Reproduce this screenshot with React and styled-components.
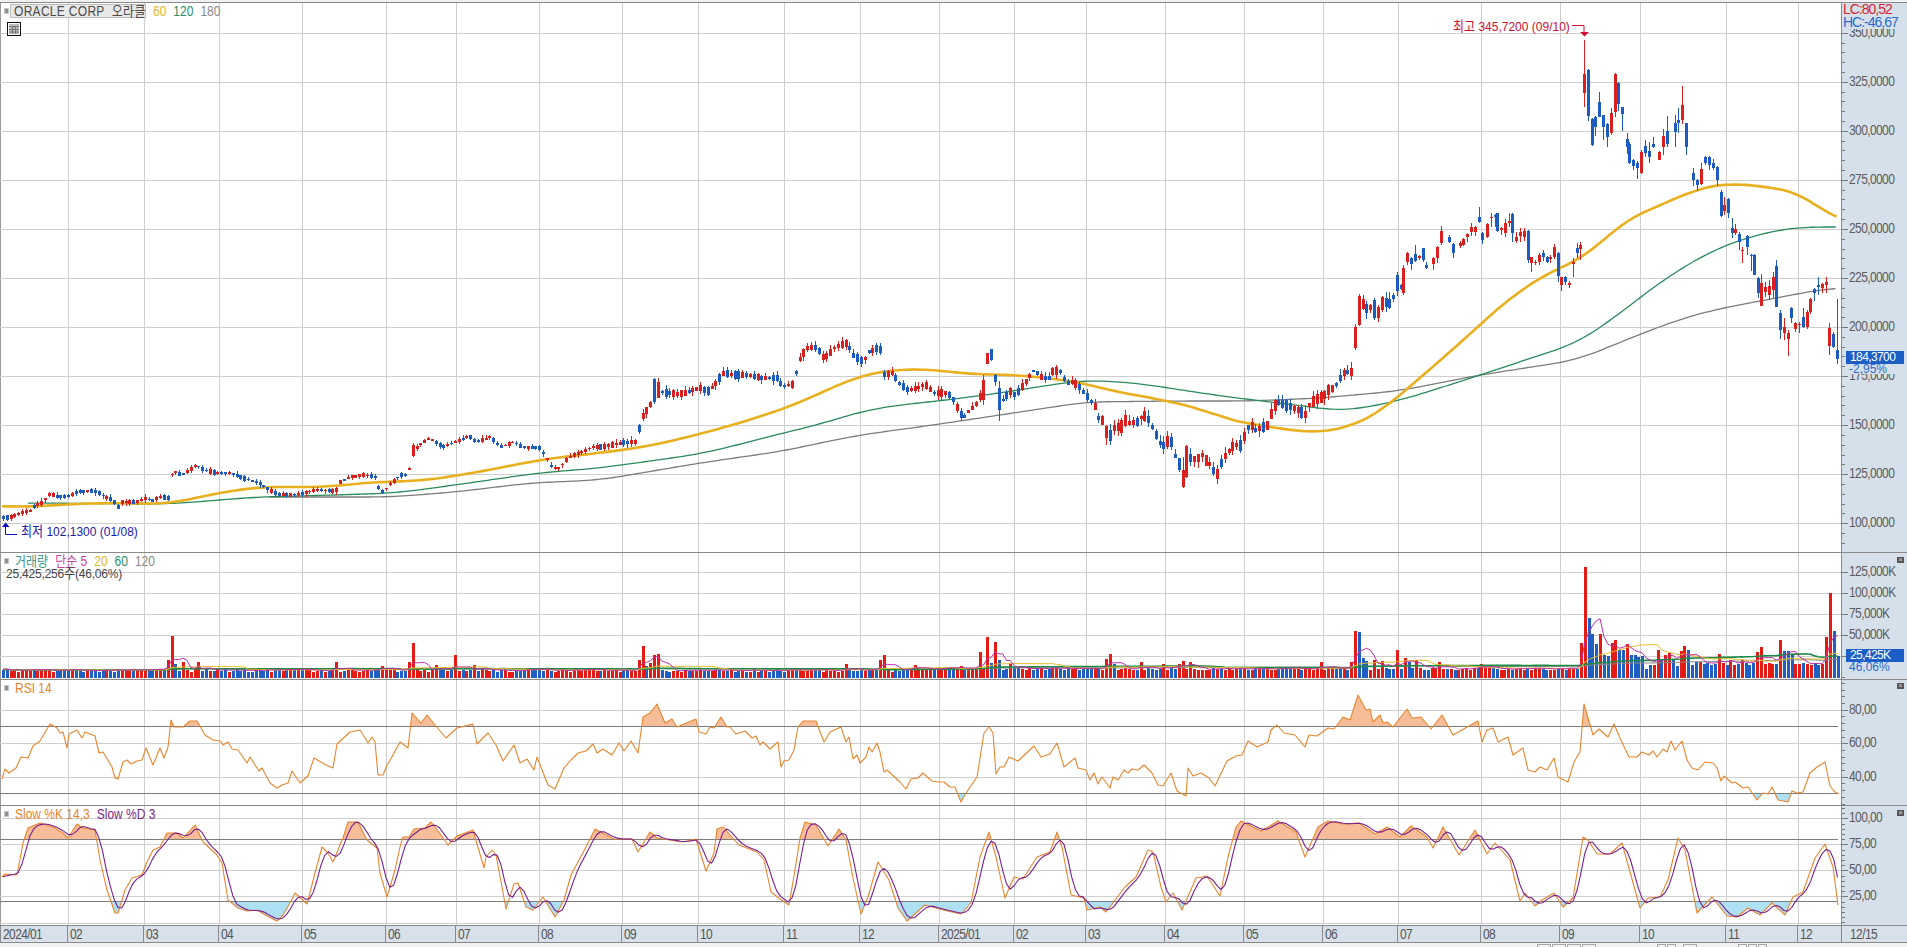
import React from 'react';
import styled, { createGlobalStyle, css } from 'styled-components';

const PLOT_W = 1841;
const STEP = 3.83;
const COUNT = 480;

const GRID_X = [68, 144, 219, 302, 386, 456, 539, 622, 698, 784, 860, 939, 1014, 1086, 1165, 1244, 1323, 1398, 1481, 1560, 1640, 1726, 1798];
const MONTHS = ['2024/01', '02', '03', '04', '05', '06', '07', '08', '09', '10', '11', '12', '2025/01', '02', '03', '04', '05', '06', '07', '08', '09', '10', '11', '12'];

// traced in page pixels: [x, y]
const PRICE = [[2,518],[12,517],[20,513],[30,511],[34,506],[43,502],[49,494],[59,497],[69,496],[77,492],[89,491],[97,492],[105,497],[113,500],[117,508],[122,502],[136,502],[146,498],[152,501],[160,497],[168,498],[172,471],[182,475],[196,465],[204,470],[215,473],[231,473],[243,478],[259,483],[269,490],[277,494],[291,495],[304,493],[316,490],[336,491],[338,483],[350,477],[364,475],[376,477],[378,487],[383,492],[391,483],[401,475],[408,475],[412,450],[417,447],[429,438],[435,442],[443,447],[455,442],[469,436],[476,442],[490,437],[500,447],[514,442],[522,447],[540,448],[546,458],[552,468],[559,468],[569,457],[581,452],[593,447],[602,447],[620,443],[635,442],[642,417],[650,406],[653,390],[657,390],[665,393],[680,394],[700,388],[707,392],[717,382],[722,373],[737,375],[748,375],[760,378],[778,378],[782,387],[793,384],[797,367],[800,358],[808,347],[817,348],[823,358],[830,353],[835,347],[847,343],[853,355],[863,362],[868,352],[877,348],[879,340],[883,375],[892,373],[898,382],[907,390],[917,388],[925,384],[933,393],[947,393],[952,398],[959,412],[963,418],[967,413],[977,403],[982,390],[985.6,355],[989,358],[992.6,353],[997,400],[1000,400],[1005,400],[1008,390],[1015,395],[1023,385],[1028,378],[1034,370],[1042,378],[1050,378],[1053,370],[1062,372],[1065,383],[1073,382],[1080,388],[1087,397],[1095,407],[1098,418],[1102,420],[1106,427],[1109,438],[1113,428],[1118,427],[1124,420],[1128,423],[1137,422],[1143,415],[1147,417],[1151,425],[1155,433],[1159,442],[1162,447],[1166,443],[1170,438],[1173,448],[1177,464],[1181,480],[1186,468],[1188,462],[1192,455],[1196,463],[1200,453],[1203,456],[1207,463],[1211,465],[1215,475],[1219,473],[1222,458],[1226,455],[1230,449],[1234,445],[1241,446],[1245,433],[1249,425],[1253,427],[1256,431],[1260,428],[1268,425],[1271,413],[1275,405],[1279,402],[1284,405],[1291,407],[1298,410],[1305,415],[1309,405],[1313,401],[1318,398],[1323,397],[1328,390],[1334,388],[1339,379],[1343,373],[1348,372],[1352,372],[1354,338],[1358,310],[1362,303],[1366,309],[1369,307],[1374,309],[1377,316],[1381,303],[1385,302],[1388,303],[1392,304],[1396,283],[1400,287]];

// tall candles in the generated part: [x, wickTop, wickBottom, bodyTop, bodyBottom, colour]
const TALL = [[412,443,457,445,456,'R'],[653,378,404,379,402,'B'],[657,378,398,382,398,'R'],[981.6,375,405,380,400,'R'],[985.7,343,366,343,365,'B'],[989,353,364,353,364,'R'],[992.6,349,361,349,360,'B'],[997,381,421,388,410,'B'],[1177.5,458,472,458,470,'B'],[1181.4,457,488,470,487,'R'],[1186,459,478,459,477,'B'],[1188,445,478,446,477,'R'],[1354,324,350,327,348,'R'],[1358,294,326,296,325,'R'],[1373,298,320,300,318,'B'],[1381,296,312,297,310,'R'],[1396,272,296,275,291,'B'],[1107,425,445,426,438,'R'],[1120,418,436,420,433,'R']];

// last stretch, candle by candle, as [x, wickTop, wickBottom, bodyTop, bodyBottom, colour] at 3x from x=1400
const TRACED = [[10,795,885,805,880,'R'],[22,757,795,760,785,'R'],[34,770,810,775,792,'B'],[46,735,785,762,782,'B'],[56,765,780,767,775,'R'],[68,745,785,745,780,'B'],[79,785,808,795,805,'B'],[91,805,832,805,808,'B'],[100,770,810,775,792,'R'],[112,738,790,740,773,'R'],[124,677,735,692,730,'R'],[136,688,720,692,712,'B'],[146,705,730,712,726,'B'],[158,730,773,733,760,'B'],[170,730,755,733,750,'R'],[180,722,745,728,738,'R'],[190,714,738,716,735,'R'],[202,700,725,702,710,'R'],[214,670,708,682,696,'R'],[226,678,708,682,695,'R'],[238,622,668,650,665,'B'],[247,697,733,700,720,'B'],[260,670,715,672,712,'R'],[272,638,680,650,655,'R'],[284,642,680,645,650,'B'],[292,638,695,640,692,'B'],[304,680,705,683,690,'R'],[316,658,712,670,698,'R'],[327,640,680,662,670,'R'],[337,640,725,642,698,'B'],[349,695,730,712,722,'R'],[360,685,725,695,708,'R'],[373,685,722,692,710,'R'],[385,690,790,692,780,'B'],[394,770,815,772,790,'R'],[406,780,795,785,788,'R'],[418,760,795,765,785,'R'],[430,750,782,760,772,'B'],[440,768,790,772,785,'B'],[451,765,790,770,778,'R'],[463,733,778,742,772,'R'],[475,755,845,758,828,'B'],[484,830,872,832,855,'R'],[496,828,855,830,845,'B'],[508,843,865,848,855,'R'],[520,775,830,785,792,'R'],[532,730,775,745,760,'B'],[541,725,780,735,747,'R'],[553,120,320,222,278,'R'],[565,208,362,210,348,'B'],[577,355,438,358,436,'B'],[586,348,408,352,380,'B'],[598,275,352,307,352,'B'],[610,345,420,345,382,'B'],[622,370,440,372,412,'B'],[632,325,405,340,400,'R'],[644,218,352,222,335,'R'],[655,245,332,250,312,'B'],[667,320,392,322,342,'B'],[680,400,462,418,442,'B'],[688,425,492,432,490,'B'],[700,478,510,480,498,'B'],[712,482,536,488,504,'B'],[724,450,522,455,520,'R'],[735,420,470,438,458,'B'],[746,425,488,452,472,'B'],[758,412,445,433,440,'B'],[770,430,562,432,485,'B'],[778,452,480,456,480,'R'],[790,388,465,408,442,'R'],[802,348,440,392,432,'B'],[814,328,405,342,400,'R'],[824,345,440,368,395,'B'],[835,325,400,360,370,'B'],[847,258,372,315,360,'R'],[859,368,465,370,442,'B'],[871,455,535,456,528,'B'],[880,505,558,520,540,'B'],[892,538,572,540,556,'B'],[904,490,555,508,552,'R'],[916,468,495,472,490,'B'],[926,468,510,472,495,'B'],[938,478,510,490,505,'B'],[950,497,558,502,540,'B'],[962,570,650,576,648,'B'],[971,590,645,615,632,'R'],[983,595,655,596,640,'B'],[995,655,715,685,698,'B'],[1006,672,705,688,700,'R'],[1018,695,750,702,725,'B'],[1027,742,790,750,752,'R'],[1040,705,765,708,740,'B'],[1052,762,812,765,767,'B'],[1063,762,825,765,825,'B'],[1073,832,895,835,878,'B'],[1084,822,918,848,918,'R'],[1096,845,890,862,875,'R'],[1108,840,900,858,885,'R'],[1118,815,895,830,870,'R'],[1129,780,922,798,920,'B'],[1141,930,1018,938,990,'B'],[1153,955,1020,980,1000,'R'],[1165,990,1068,1000,1016,'R'],[1174,922,968,925,955,'B'],[1186,965,995,970,988,'R'],[1198,965,1000,972,975,'R'],[1210,925,985,950,980,'B'],[1220,930,987,935,982,'R'],[1231,895,942,897,935,'R'],[1243,865,902,868,878,'B'],[1255,832,885,855,862,'B'],[1265,848,878,852,865,'R'],[1277,832,878,845,855,'R'],[1288,970,1065,985,1038,'R'],[1300,995,1045,1002,1040,'B'],[1312,897,1092,1050,1078,'B']];

const MA60 = [[2,506],[20,507],[45,506],[69,504],[115,503],[170,504],[198,497],[225,492],[257,487],[336,487],[340,485],[376,482],[419,481],[455,476],[494,469],[534,461],[561,457],[600,453],[650,446],[700,434],[750,420],[797,404],[833,387],[863,375],[890,370],[928,369],[967,374],[1017,375],[1064,380],[1093,385],[1114,392],[1150,397],[1182,405],[1202,408],[1218,417],[1250,424],[1279,428],[1300,432],[1323,432],[1350,427],[1379,413],[1400,395],[1450,352],[1513,295],[1557,268],[1587,257],[1620,223],[1667,202],[1700,188],[1728,183],[1777,188],[1805,195],[1837,222]];
const MA120 = [[28,503],[170,504],[257,497],[336,495],[395,493],[455,485],[538,473],[600,468],[650,461],[700,454],[733,446],[783,433],[813,426],[867,410],[900,405],[947,400],[1000,393],[1050,385],[1086,380],[1136,383],[1221,396],[1279,403],[1332,410],[1352,410],[1398,401],[1443,387],[1480,375],[1577,343],[1607,323],[1667,277],[1717,248],[1750,237],[1777,230],[1803,227],[1837,227]];
const MA180 = [[269,497],[391,497],[455,492],[530,483],[600,480],[700,463],[783,451],[820,443],[860,435],[933,425],[1000,415],[1086,402],[1175,401],[1250,401],[1321,398],[1398,391],[1480,375],[1577,360],[1633,337],[1683,318],[1727,307],[1777,298],[1817,290],[1837,288]];

// volume spikes: [x, top, colour]
const SPIKES = [[171.7,636,'R'],[167.7,660,'R'],[175.7,664,'B'],[182,662,'R'],[197.7,662,'R'],[337,662,'R'],[382,666,'R'],[412.5,643,'R'],[408.6,662,'R'],[436,665,'R'],[454,655,'R'],[476,665,'R'],[548,668,'R'],[642,646,'R'],[638.6,660,'R'],[653.6,655,'R'],[657,654,'R'],[650,663,'R'],[646,666,'B'],[846,664,'R'],[878.6,660,'R'],[883.6,655,'R'],[913,665,'R'],[959,666,'R'],[981,652,'R'],[985.7,637,'R'],[990,663,'B'],[996.4,642,'R'],[1000.7,660,'B'],[1008.6,664,'R'],[1105,659,'R'],[1110,654,'R'],[1113,664,'B'],[1139,662,'R'],[1162,664,'R'],[1181,661,'R'],[1177,664,'R'],[1188.6,662,'R'],[1320,662,'R'],[1350,662,'R'],[1354,631,'R'],[1358.6,632,'B'],[1363,658,'B'],[1367,661,'B'],[1373.6,660,'R'],[1380,661,'R'],[1396,650,'R'],[1403.6,658,'R'],[1407,662,'B'],[1415,660,'R'],[1441,662,'R'],[1480,664,'R'],[1580,643,'R'],[1584,567,'R'],[1588,618,'B'],[1592,634,'B'],[1595,644,'B'],[1599,634,'R'],[1603,655,'B'],[1607,656,'B'],[1610,643,'R'],[1614,640,'R'],[1618,650,'B'],[1622,650,'B'],[1626,644,'R'],[1629,655,'B'],[1633,655,'B'],[1637,657,'B'],[1641,656,'B'],[1648,665,'B'],[1652,665,'R'],[1656,650,'R'],[1660,660,'B'],[1664,655,'R'],[1668,653,'R'],[1672,660,'B'],[1678,666,'B'],[1682,651,'R'],[1686,646,'R'],[1690,650,'B'],[1694,662,'B'],[1701,662,'R'],[1712,665,'B'],[1720,654,'R'],[1731,660,'R'],[1742,660,'R'],[1757,652,'R'],[1761,647,'R'],[1780,640,'R'],[1784,651,'B'],[1788,651,'B'],[1792,655,'B'],[1825,637,'R'],[1829,593,'R'],[1833,631,'B'],[1837,656,'B']];

const RSI = [[2,779],[5,769],[9,773],[16,768],[21,757],[28,758],[33,746],[40,741],[50,724],[57,728],[60,733],[63,732],[67,748],[69,734],[77,730],[82,738],[85,732],[95,736],[99,753],[103,752],[112,767],[115,778],[118,779],[123,762],[127,760],[131,764],[137,761],[142,760],[146,748],[153,765],[160,748],[164,758],[168,747],[171,720],[174,727],[183,727],[190,721],[197,721],[205,735],[213,740],[220,741],[223,745],[228,742],[232,749],[238,750],[247,763],[250,757],[259,771],[262,768],[270,783],[277,788],[282,785],[288,783],[292,771],[300,783],[308,776],[314,758],[326,765],[333,768],[337,744],[350,732],[360,730],[368,743],[372,737],[375,742],[378,775],[383,775],[387,765],[392,757],[400,742],[408,748],[412,713],[421,723],[427,715],[435,725],[446,738],[457,728],[473,724],[477,744],[488,733],[496,745],[503,761],[514,745],[520,763],[527,759],[534,770],[537,757],[548,785],[555,789],[564,768],[571,760],[578,753],[586,751],[593,744],[597,753],[603,749],[612,755],[619,743],[624,751],[631,741],[638,753],[643,717],[650,713],[657,704],[665,723],[672,719],[677,727],[696,719],[699,732],[706,734],[710,727],[714,728],[721,717],[727,727],[730,727],[736,734],[745,731],[752,738],[756,736],[760,745],[763,742],[770,749],[778,742],[781,767],[784,761],[789,760],[794,750],[798,727],[803,721],[816,721],[824,742],[830,732],[841,727],[846,742],[849,737],[853,759],[857,755],[860,763],[866,757],[869,747],[872,752],[877,743],[880,752],[884,772],[887,770],[900,782],[906,789],[911,779],[918,778],[923,773],[932,781],[939,782],[944,782],[950,787],[955,787],[961,802],[966,793],[977,777],[984,733],[989,727],[993,733],[996,774],[1000,767],[1004,767],[1009,757],[1018,761],[1034,746],[1041,757],[1050,754],[1057,743],[1064,767],[1075,758],[1078,768],[1086,770],[1090,780],[1094,773],[1098,784],[1102,777],[1110,788],[1113,777],[1118,780],[1124,770],[1128,773],[1132,769],[1138,770],[1144,765],[1152,773],[1158,785],[1163,786],[1171,773],[1177,791],[1186,796],[1188,768],[1193,776],[1201,773],[1209,778],[1215,786],[1227,761],[1236,756],[1242,755],[1248,741],[1257,747],[1268,742],[1271,730],[1277,725],[1284,733],[1295,735],[1305,747],[1309,735],[1317,736],[1328,728],[1334,729],[1343,717],[1350,720],[1358,695],[1366,710],[1370,709],[1373,722],[1380,715],[1383,723],[1387,722],[1393,727],[1407,709],[1412,718],[1421,717],[1431,729],[1442,715],[1453,735],[1478,721],[1482,742],[1487,730],[1493,728],[1498,742],[1508,737],[1513,755],[1523,748],[1528,770],[1535,772],[1540,767],[1547,770],[1554,758],[1558,777],[1568,782],[1574,762],[1580,752],[1584,704],[1593,735],[1599,729],[1608,737],[1614,724],[1620,738],[1629,757],[1637,757],[1642,752],[1649,755],[1653,751],[1657,757],[1663,749],[1667,752],[1671,741],[1675,750],[1682,741],[1687,760],[1692,768],[1698,770],[1705,762],[1713,763],[1717,768],[1721,781],[1724,776],[1732,783],[1735,782],[1743,788],[1748,787],[1757,800],[1763,793],[1768,794],[1772,787],[1778,800],[1788,802],[1792,791],[1797,793],[1803,792],[1810,773],[1817,767],[1825,762],[1830,786],[1835,792],[1839,794]];

const STOCH_K = [[2,877],[5,874],[17,875],[23,843],[28,828],[40,823],[53,827],[63,833],[68,838],[77,824],[83,828],[95,830],[100,860],[107,890],[115,913],[118,913],[125,890],[132,878],[142,875],[147,862],[153,850],[160,847],[167,833],[177,833],[183,838],[195,825],[203,842],[217,855],[222,863],[228,900],[238,908],[247,911],[257,910],[267,916],[277,921],[283,915],[290,903],[295,893],[307,904],[315,873],[322,847],[328,853],[333,862],[343,838],[348,822],[358,822],[367,840],[377,848],[380,873],[387,897],[395,870],[400,847],[403,837],[409,837],[414,829],[425,828],[431,822],[439,832],[448,845],[457,836],[473,830],[484,868],[486,857],[492,850],[496,855],[502,887],[506,909],[514,884],[518,883],[526,907],[533,910],[543,897],[555,917],[564,900],[571,875],[586,847],[595,829],[614,839],[632,839],[638,852],[650,832],[657,838],[682,842],[696,839],[706,871],[714,853],[717,829],[723,827],[739,845],[757,852],[764,860],[771,892],[780,899],[789,905],[795,870],[800,838],[805,822],[816,825],[828,846],[839,829],[846,840],[853,878],[861,914],[868,897],[878,862],[889,880],[898,908],[907,921],[925,905],[943,910],[961,914],[971,903],[980,857],[989,832],[996,857],[1005,898],[1014,877],[1023,879],[1037,857],[1050,852],[1057,832],[1062,847],[1071,895],[1084,898],[1087,910],[1100,907],[1106,912],[1125,887],[1136,877],[1148,850],[1153,852],[1161,887],[1166,902],[1173,893],[1182,910],[1196,878],[1207,876],[1220,896],[1228,857],[1236,827],[1241,821],[1261,831],[1278,821],[1296,832],[1305,857],[1318,827],[1328,821],[1343,824],[1359,823],[1375,834],[1387,827],[1400,837],[1411,826],[1427,837],[1433,848],[1443,827],[1459,855],[1475,830],[1487,854],[1495,843],[1510,860],[1520,901],[1525,893],[1535,906],[1542,900],[1554,893],[1563,907],[1573,898],[1583,837],[1588,840],[1597,854],[1610,854],[1622,843],[1640,908],[1648,898],[1660,897],[1668,880],[1678,838],[1685,850],[1697,913],[1712,897],[1727,916],[1737,917],[1748,908],[1760,915],[1772,903],[1785,915],[1793,897],[1803,892],[1815,858],[1825,844],[1833,867],[1838,905]];

const seeded = seed => () => {
  seed = (seed + 0x6d2b79f5) | 0;
  let t = Math.imul(seed ^ (seed >>> 15), 1 | seed);
  t = (t + Math.imul(t ^ (t >>> 7), 61 | t)) ^ t;
  return ((t ^ (t >>> 14)) >>> 0) / 4294967296;
};

const at = (pts, x) => {
  if (x <= pts[0][0]) return pts[0][1];
  for (let i = 1; i < pts.length; i++) {
    if (x <= pts[i][0]) {
      const [x0, y0] = pts[i - 1];
      const [x1, y1] = pts[i];
      return y0 + ((y1 - y0) * (x - x0)) / (x1 - x0);
    }
  }
  return pts[pts.length - 1][1];
};

const xOf = i => 3 + i * STEP;
const indexOf = x => Math.round((x - 3) / STEP);
const line = pts => pts.map(p => `${p[0]},${p[1]}`).join(' ');

// averages were traced sparsely, so resample them and take the corners off
const smooth = pts => {
  const out = [];
  const first = pts[0][0];
  const last = pts[pts.length - 1][0];
  for (let x = first; x <= last; x += STEP) {
    let sum = 0;
    for (let k = -6; k <= 6; k++) sum += at(pts, Math.min(last, Math.max(first, x + k * STEP)));
    out.push([x, +(sum / 13).toFixed(2)]);
  }
  return out;
};

const buildCandles = () => {
  const rnd = seeded(11);
  const list = [];
  for (let i = 0; i < COUNT; i++) {
    const x = xOf(i);
    if (x >= 1401) break;
    const c = at(PRICE, x);
    const prev = at(PRICE, x - STEP);
    const s = x < 600 ? 1.6 : x < 1100 ? 2.6 : 3.8;
    const h = s * (0.4 + rnd() * 1.1);
    const red = c < prev - 0.4 ? rnd() < 0.85 : c > prev + 0.4 ? rnd() < 0.15 : rnd() < 0.5;
    list[i] = { x, wt: c - h - rnd() * s * 1.6, wb: c + h + rnd() * s * 1.6, bt: c - h, bb: c + h, red };
  }
  TALL.forEach(([x, wt, wb, bt, bb, col]) => {
    list[indexOf(x)] = { x: xOf(indexOf(x)), wt, wb, bt, bb, red: col === 'R' };
  });
  TRACED.forEach(([zx, wt, wb, bt, bb, col]) => {
    const x = 1400 + zx / 3;
    list[indexOf(x)] = { x, wt: wt / 3, wb: wb / 3, bt: bt / 3, bb: bb / 3, red: col === 'R' };
  });
  return list.filter(Boolean);
};

const CANDLES = buildCandles();

const buildVolume = () => {
  const rnd = seeded(5);
  const list = [];
  for (let i = 0; i < COUNT; i++) {
    const x = xOf(i);
    const base = x < 900 ? 7.5 : x < 1650 ? 9 : 14;
    const candle = CANDLES.find(c => indexOf(c.x) === i);
    list[i] = { x, h: base + rnd() * 3 - 1.5, red: candle ? candle.red : rnd() > 0.5 };
  }
  SPIKES.forEach(([x, top, col]) => {
    const i = indexOf(x);
    if (list[i]) list[i] = { x: list[i].x, h: 678 - top, red: col === 'R' };
  });
  return list;
};

const VOLUME = buildVolume();

const sma = n => VOLUME.map((v, i) => {
  const from = Math.max(0, i - n + 1);
  const part = VOLUME.slice(from, i + 1);
  return [v.x, 677.5 - part.reduce((a, b) => a + b.h, 0) / part.length];
});

const STOCH_D = VOLUME.map(v => {
  const a = at(STOCH_K, v.x);
  const b = at(STOCH_K, v.x - STEP);
  const c = at(STOCH_K, v.x - STEP * 2);
  return [v.x, (a + b + c) / 3];
});

const GlobalStyle = createGlobalStyle`
  html, body {
    margin: 0;
    padding: 0;
    background: #f1f1f1;
    overflow: hidden;
  }
`;

const chartText = css`
  font-family: "Liberation Sans", "Noto Sans CJK KR", sans-serif;
  font-size: 12px;
  letter-spacing: -0.6px;
  line-height: 12px;
  white-space: pre;
`;

const Screen = styled.div`
  width: 1907px;
  height: 947px;
  padding-top: 2px;
  box-sizing: border-box;
  display: grid;
  grid-template-rows: 550px 127px 126px 120px 18px 4px;
  overflow: hidden;
`;

const Panel = styled.section`
  display: flex;
  min-height: 0;
  background: #fff;
  border-top: 1px solid #8a8a8a;
  box-sizing: border-box;
`;

const Plot = styled.div`
  position: relative;
  width: ${PLOT_W}px;
  flex: none;
  border-left: 1px solid #9a9a9a;
  box-sizing: border-box;
`;

const Chart = styled.svg`
  display: block;
  margin-left: -1px;
`;

const Axis = styled.div`
  position: relative;
  width: 66px;
  flex: none;
  background: #d6e0ea;
  border-left: 1px solid #8a8a8a;
  box-sizing: border-box;
  overflow: hidden;
`;

const Marks = styled.svg`
  position: absolute;
  left: 0;
  top: 0;
`;

const Tick = styled.span.attrs(p => ({ style: { top: `${p.$y}px` } }))`
  ${chartText}
  position: absolute;
  left: 7px;
  color: #5c5c5c;
  transform: translateY(-50%) scaleY(1.15);
`;

const Extreme = styled.div`
  ${chartText}
  position: absolute;
  left: 0;
  width: 65px;
  padding-left: 1px;
  background: #d6e0ea;
  color: ${p => p.$color};
  font-size: 14px;
  letter-spacing: -1px;
  height: 13px;
  line-height: 13px;
  top: ${p => p.$top}px;
`;

const ValueTag = styled.div`
  ${chartText}
  position: absolute;
  left: 4px;
  width: 58px;
  height: 13px;
  padding-left: 4px;
  box-sizing: border-box;
  line-height: 13px;
  background: #1b5fc6;
  color: #fff;
  top: ${p => p.$top}px;
`;

const ChangeText = styled.div`
  ${chartText}
  position: absolute;
  left: 7px;
  width: 50px;
  height: 10px;
  line-height: 10px;
  letter-spacing: 0;
  color: #2a6ad0;
  background: #d6e0ea;
  top: ${p => p.$top}px;
`;

const CloseBox = styled.button`
  position: absolute;
  top: ${p => p.$top}px;
  right: 3px;
  width: 7px;
  height: 6px;
  padding: 0;
  border: 0;
  background: #555;
  color: #ddd;
  font: 7px/6px "Liberation Sans", sans-serif;
`;

const Legend = styled.div`
  ${chartText}
  letter-spacing: 0;
  position: absolute;
  left: 3px;
  top: ${p => p.$top}px;
  display: flex;
  align-items: center;
  gap: ${p => p.$gap || 7}px;
`;

const LegendDot = styled.i`
  width: 3px;
  height: 4px;
  background: #8f8f8f;
  border: 1px solid #c6c6c6;
  box-sizing: content-box;
  flex: none;
  margin-right: -1px;
`;

const NameButton = styled.div`
  height: 14px;
  width: 136px;
  padding-left: 3px;
  box-sizing: border-box;
  margin-left: -5px;
  background: #e8e8e8;
  border: 1px solid #bdbdbd;
  line-height: 12px;
  letter-spacing: 0.3px;
`;

const LegendItem = styled.span`
  color: ${p => p.$color};
  display: inline-block;
  transform: scaleY(1.15);
`;

const SubLegend = styled.div`
  ${chartText}
  letter-spacing: -0.2px;
  position: absolute;
  left: 5px;
  top: ${p => p.$top}px;
  color: #444;
  transform: scaleY(1.1);
`;

const TableIcon = styled.svg`
  position: absolute;
  left: 6px;
  top: 19px;
`;

const Note = styled.div`
  ${chartText}
  letter-spacing: 0;
  position: absolute;
  left: ${p => p.$left}px;
  top: ${p => p.$top}px;
  color: ${p => p.$color};
  transform: scaleY(1.1);
`;

const DateRow = styled.div`
  display: flex;
  background: #d8e1ea;
  border-top: 1px solid #8a8a8a;
  border-bottom: 1px solid #8a8a8a;
  box-sizing: border-box;
`;

const DateTrack = styled.div`
  display: flex;
  width: ${PLOT_W}px;
  flex: none;
`;

const DateCell = styled.div`
  ${chartText}
  flex: none;
  box-sizing: border-box;
  padding-left: 2px;
  padding-top: 2px;
  color: #555;
  border-left: 1px solid #8a8a8a;
`;

const DateEnd = styled.div`
  ${chartText}
  flex: 1;
  padding: 2px 0 0 8px;
  color: #555;
  border-left: 1px solid #8a8a8a;
`;

const DateText = styled.span`
  display: inline-block;
  transform: scaleY(1.15);
`;

const ToolStrip = styled.div`
  display: flex;
  align-items: flex-start;
  padding-left: 1537px;
  gap: 1px;
  background: #f1f1f1;
  overflow: hidden;
`;

const ToolTop = styled.span`
  flex: none;
  width: ${p => p.$w}px;
  height: 6px;
  margin-top: 1px;
  margin-right: ${p => p.$gap || 0}px;
  border: 1px solid #a8a8a8;
  box-sizing: border-box;
`;

const Grid = ({ top, bottom, ys }) => (
  <g shapeRendering="crispEdges" stroke="#cfcfcf" strokeWidth="1">
    {GRID_X.map(x => <line key={x} x1={x + 0.5} x2={x + 0.5} y1={top} y2={bottom} />)}
    {ys.map(y => <line key={y} x1="0" x2={PLOT_W} y1={Math.round(y) + 0.5} y2={Math.round(y) + 0.5} />)}
  </g>
);

const Candles = () => (
  <g shapeRendering="crispEdges">
    {CANDLES.map((c, i) => {
      const x = Math.round(c.x);
      const color = c.red ? '#d9201f' : '#1c5cc0';
      return (
        <g key={i} fill={color}>
          <rect x={x} y={c.wt} width="1" height={c.wb - c.wt} />
          <rect x={x - 1} y={c.bt} width="3" height={Math.max(1, c.bb - c.bt)} />
        </g>
      );
    })}
  </g>
);

const Bars = () => (
  <g shapeRendering="crispEdges">
    {VOLUME.map((v, i) => (
      <rect key={i} x={Math.round(v.x) - 1} y={678 - v.h} width="3" height={v.h} fill={v.red ? '#e31b14' : '#1f5fc4'} />
    ))}
  </g>
);

const Curve = ({ pts, color, width = 1 }) => (
  <polyline points={line(pts)} fill="none" stroke={color} strokeWidth={width} strokeLinejoin="round" />
);

const BandFill = ({ id, pts, high, low, top, bottom }) => {
  const closed = level => `${line(pts)} ${pts[pts.length - 1][0]},${level} ${pts[0][0]},${level}`;
  return (
    <g>
      <clipPath id={`${id}-hi`}><rect x="0" y={top} width={PLOT_W} height={high - top} /></clipPath>
      <clipPath id={`${id}-lo`}><rect x="0" y={low} width={PLOT_W} height={bottom - low} /></clipPath>
      <polygon points={closed(high)} fill="#f6bd98" clipPath={`url(#${id}-hi)`} />
      <polygon points={closed(low)} fill="#aee0f3" clipPath={`url(#${id}-lo)`} />
    </g>
  );
};

const Levels = ({ ys }) => (
  <g shapeRendering="crispEdges" stroke="#7c7c7c">
    {ys.map(y => <line key={y} x1="0" x2="1838" y1={y + 0.5} y2={y + 0.5} />)}
  </g>
);

// tick marks on a fixed step, longer ones at the labels
const AxisTicks = ({ height, offset, majors, minorStep }) => {
  const lines = [];
  for (let y = majors[0] % minorStep; y < height + offset; y += minorStep) lines.push(y);
  return (
    <Marks width="12" height={height} viewBox={`0 ${offset} 12 ${height}`}>
      <g shapeRendering="crispEdges" stroke="#777">
        {lines.map(y => <line key={y} x1="0" x2="3" y1={Math.round(y) + 0.5} y2={Math.round(y) + 0.5} />)}
        {majors.map(y => <line key={y} x1="0" x2="6" y1={Math.round(y) + 0.5} y2={Math.round(y) + 0.5} />)}
      </g>
    </Marks>
  );
};

const priceY = [32.7, 81.7, 130.7, 179.8, 228.8, 277.9, 327, 376, 425, 474, 523.2];
const priceLabels = ['350,0000', '325,0000', '300,0000', '275,0000', '250,0000', '225,0000', '200,0000', '175,0000', '150,0000', '125,0000', '100,0000'];
const volY = [572, 593, 614, 635, 656];
const volLabels = ['125,000K', '100,000K', '75,000K', '50,000K'];
const rsiY = [709.7, 743, 776.7];
const rsiLabels = ['80,00', '60,00', '40,00'];
const stochY = [818.3, 844.3, 870, 896];
const stochLabels = ['100,00', '75,00', '50,00', '25,00'];

const MainPanel = () => (
  <Panel>
    <Plot>
      <Chart width={PLOT_W} height="549" viewBox={`0 3 ${PLOT_W} 549`}>
        <Grid top={3} bottom={552} ys={priceY} />
        <Curve pts={smooth(MA180)} color="#7d7d7d" width={1.3} />
        <Curve pts={smooth(MA120)} color="#2a8a5c" width={1.3} />
        <Curve pts={smooth(MA60)} color="#e8b01f" width={2.6} />
        <Candles />
        <polyline points="1572,25.5 1584,25.5 1584,33" fill="none" stroke="#d01030" />
        <polygon points="1580,32 1589,32 1584.5,36.5" fill="#d01030" />
        <polyline points="5.5,526 5.5,534.5 17,534.5" fill="none" stroke="#1010c8" />
        <polygon points="2,527 9.5,527 5.7,522.5" fill="#1010c8" />
      </Chart>
      <Legend $top={1} $gap={7}>
        <LegendDot />
        <NameButton><LegendItem $color="#4c4c4c">ORACLE CORP  오라클</LegendItem></NameButton>
        <LegendItem $color="#e0b820">60</LegendItem>
        <LegendItem $color="#1f9068">120</LegendItem>
        <LegendItem $color="#8a8a8a">180</LegendItem>
      </Legend>
      <TableIcon width="15" height="15" viewBox="0 0 15 15">
        <rect x="0.5" y="0.5" width="13" height="13" fill="#fff" stroke="#111" />
        <rect x="2" y="2" width="10" height="10" fill="#bbb" />
        <path d="M2 4.5h10M2 7.5h10M2 10h10M5.5 4v8M8.5 4v8" stroke="#777" fill="none" />
      </TableIcon>
      <Note $left={1452} $top={18} $color="#d01030">최고 345,7200 (09/10)</Note>
      <Note $left={20} $top={523} $color="#1a1ab0">최저 102,1300 (01/08)</Note>
    </Plot>
    <Axis>
      <AxisTicks height={549} offset={3} majors={priceY} minorStep={9.81} />
      {priceLabels.map((t, i) => <Tick key={t} $y={priceY[i] - 4}>{t}</Tick>)}
      <Extreme $top={0} $color="#d8242c">LC:80,52</Extreme>
      <Extreme $top={13} $color="#2a6ad0">HC:-46,67</Extreme>
      <ValueTag $top={348}>184,3700</ValueTag>
      <ChangeText $top={361}>-2,95%</ChangeText>
    </Axis>
  </Panel>
);

const VolumePanel = () => (
  <Panel>
    <Plot>
      <Chart width={PLOT_W} height="126" viewBox={`0 553 ${PLOT_W} 126`}>
        <Grid top={553} bottom={679} ys={volY} />
        <Bars />
        <Curve pts={sma(120)} color="#8a8a8a" />
        <Curve pts={sma(60)} color="#1d8a46" width={1.6} />
        <Curve pts={sma(20)} color="#e6bc2a" />
        <Curve pts={sma(5)} color="#c02ca8" />
      </Chart>
      <Legend $top={2} $gap={7}>
        <LegendDot />
        <LegendItem $color="#3a9a8a">거래량</LegendItem>
        <LegendItem $color="#cc44aa">단순 5</LegendItem>
        <LegendItem $color="#e0b820">20</LegendItem>
        <LegendItem $color="#1f9068">60</LegendItem>
        <LegendItem $color="#8a8a8a">120</LegendItem>
      </Legend>
      <SubLegend $top={15}>25,425,256주(46,06%)</SubLegend>
    </Plot>
    <Axis>
      <AxisTicks height={126} offset={553} majors={volY} minorStep={21} />
      {volLabels.map((t, i) => <Tick key={t} $y={volY[i] - 554}>{t}</Tick>)}
      <CloseBox $top={4}>×</CloseBox>
      <ValueTag $top={96}>25,425K</ValueTag>
      <ChangeText $top={109}>46,06%</ChangeText>
    </Axis>
  </Panel>
);

const RsiPanel = () => (
  <Panel>
    <Plot>
      <Chart width={PLOT_W} height="125" viewBox={`0 680 ${PLOT_W} 125`}>
        <Grid top={680} bottom={805} ys={rsiY} />
        <BandFill id="rsi" pts={RSI} high={726} low={793} top={680} bottom={805} />
        <Levels ys={[726, 793]} />
        <Curve pts={RSI} color="#e8862e" width={1.1} />
      </Chart>
      <Legend $top={2}>
        <LegendDot />
        <LegendItem $color="#e8842c">RSI 14</LegendItem>
      </Legend>
    </Plot>
    <Axis>
      <AxisTicks height={125} offset={680} majors={rsiY} minorStep={6.7} />
      {rsiLabels.map((t, i) => <Tick key={t} $y={rsiY[i] - 681}>{t}</Tick>)}
      <CloseBox $top={3}>×</CloseBox>
    </Axis>
  </Panel>
);

const StochPanel = () => (
  <Panel>
    <Plot>
      <Chart width={PLOT_W} height="119" viewBox={`0 806 ${PLOT_W} 119`}>
        <Grid top={806} bottom={925} ys={[...stochY, 922.5]} />
        <BandFill id="stoch" pts={STOCH_K} high={839} low={901} top={806} bottom={925} />
        <Levels ys={[839, 901]} />
        <Curve pts={STOCH_K} color="#e8862e" width={1.1} />
        <Curve pts={STOCH_D} color="#7b1f8f" width={1.1} />
      </Chart>
      <Legend $top={2} $gap={7}>
        <LegendDot />
        <LegendItem $color="#e8842c">Slow %K 14,3</LegendItem>
        <LegendItem $color="#7a2a8a">Slow %D 3</LegendItem>
      </Legend>
    </Plot>
    <Axis>
      <AxisTicks height={119} offset={806} majors={stochY} minorStep={5.2} />
      {stochLabels.map((t, i) => <Tick key={t} $y={stochY[i] - 807}>{t}</Tick>)}
      <CloseBox $top={4}>×</CloseBox>
    </Axis>
  </Panel>
);

const DateAxis = () => {
  const edges = [1, ...GRID_X, PLOT_W];
  return (
    <DateRow>
      <DateTrack>
        {MONTHS.map((m, i) => (
          <DateCell key={`${m}${i}`} style={{ width: edges[i + 1] - edges[i] }}>
            <DateText>{m}</DateText>
          </DateCell>
        ))}
      </DateTrack>
      <DateEnd><DateText>12/15</DateText></DateEnd>
    </DateRow>
  );
};

export default function App() {
  return (
    <>
      <GlobalStyle />
      <Screen>
        <MainPanel />
        <VolumePanel />
        <RsiPanel />
        <StochPanel />
        <DateAxis />
        <ToolStrip>
          <ToolTop $w={14} />
          <ToolTop $w={14} />
          <ToolTop $w={14} />
          <ToolTop $w={14} $gap={60} />
          <ToolTop $w={9} />
          <ToolTop $w={9} $gap={6} />
          <ToolTop $w={14} $gap={40} />
          <ToolTop $w={9} />
          <ToolTop $w={9} />
          <ToolTop $w={9} />
        </ToolStrip>
      </Screen>
    </>
  );
}
